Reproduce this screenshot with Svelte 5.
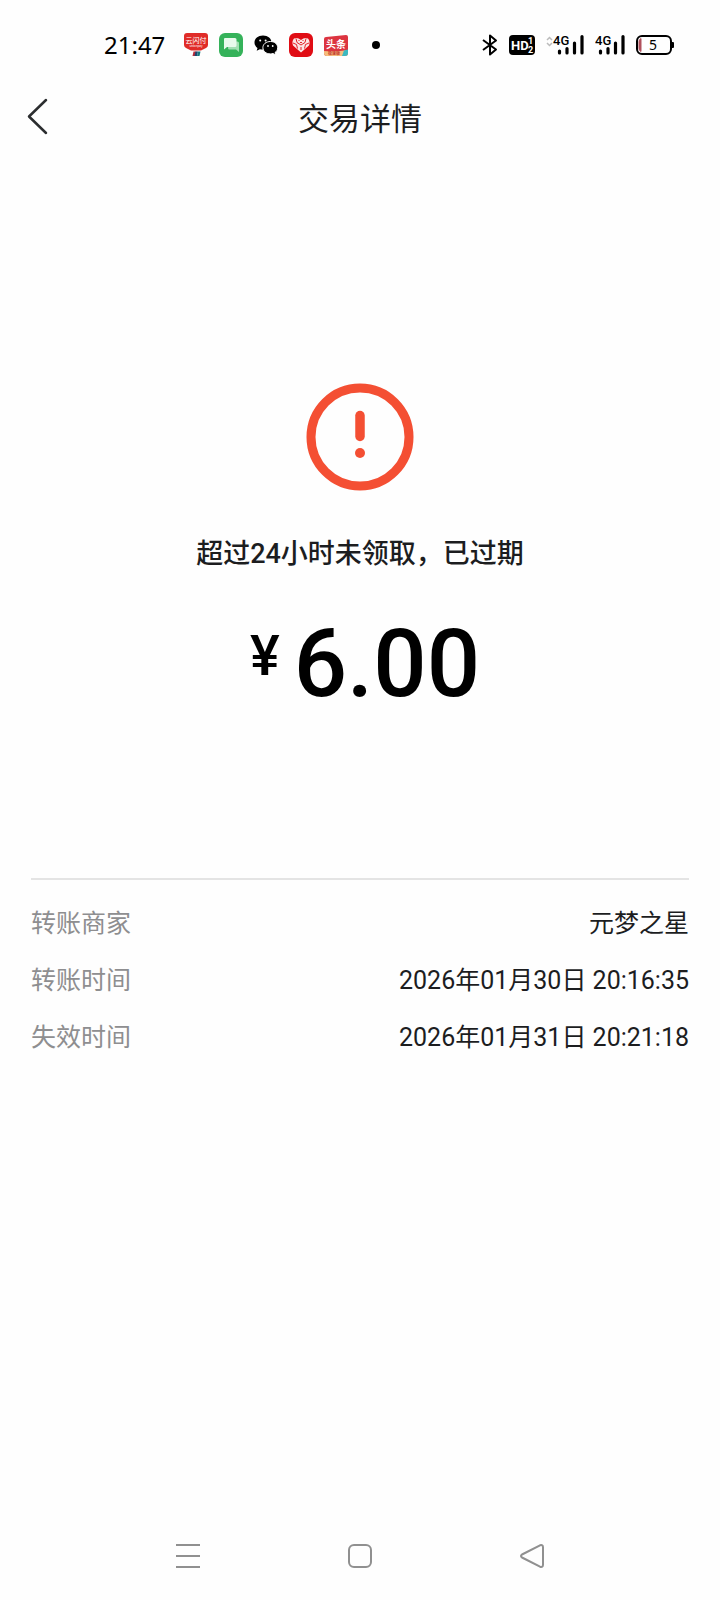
<script lang="ts">
  interface Detail {
    label: string;
    value: string;
  }

  const details: Detail[] = [
    { label: '转账商家', value: '元梦之星' },
    { label: '转账时间', value: '2026年01月30日 20:16:35' },
    { label: '失效时间', value: '2026年01月31日 20:21:18' },
  ];
</script>

<div class="screen">
  <div class="status-bar">
    <div class="status-left">
      <time class="clock">21:47</time>
      <div class="apps">
        <!-- UnionPay -->
        <svg width="26" height="26" viewBox="0 0 26 26" aria-hidden="true">
          <path d="M4 1h18q3 0 3 3v9q0 2-2 3l-5 2.500H8L3 16q-2-1-2-3V4q0-3 3-3z" fill="#e02c28" />
          <text x="13" y="11" class="thin-glyph" font-size="7" text-anchor="middle" fill="#fff">云闪付</text>
          <text x="13" y="15" class="thin-glyph" font-size="3" text-anchor="middle" fill="#fff">unionpay</text>
          <path d="M10.500 19.500h3l-1 4.500h-3z" fill="#b52c3c" />
          <path d="M12.500 19.500H15l-1 4.500h-2.500z" fill="#1d4670" />
          <path d="M15 19.500h2.500l-1 4.500H14z" fill="#16777c" />
        </svg>
        <!-- Messages -->
        <svg width="26" height="26" viewBox="0 0 26 26" aria-hidden="true">
          <rect x="1" y="1" width="24" height="24" rx="6" fill="#35b25a" />
          <path d="M11.500 9.500h8q1.500 0 1.500 1.500v9l-3-2.500h-6.500q-1.500 0-1.500-1.500z" fill="#a2dfb3" />
          <path d="M7 6h10q1.500 0 1.500 1.500v6q0 1.500-1.500 1.500H9l-3 2.500V7q0-1 1-1z" fill="#e9faed" />
        </svg>
        <!-- WeChat -->
        <svg width="26" height="26" viewBox="0 0 26 26" aria-hidden="true">
          <path d="M10 3.500c-5 0-8.500 3-8.500 7 0 2.300 1.200 4.200 3 5.500l-.8 2.800 3.200-1.600q1.500.4 3.100.4c5 0 8.500-3.100 8.500-7.100s-3.500-7-8.500-7z" />
          <path d="M17.500 9.500c-4.500 0-7.600 2.700-7.600 6.200s3.100 6.200 7.600 6.200q1.300 0 2.500-.4l2.700 1.500-.7-2.400c1.700-1.200 2.700-2.900 2.700-4.900 0-3.500-2.900-6.200-7.200-6.200z" stroke="#fefefe" stroke-width="1" />
          <g fill="#fefefe">
            <circle cx="7.200" cy="8.500" r="1" />
            <circle cx="12.600" cy="8.500" r="1" />
            <circle cx="15" cy="14" r=".9" />
            <circle cx="19.700" cy="14" r=".9" />
          </g>
        </svg>
        <!-- Heart -->
        <svg width="26" height="26" viewBox="0 0 26 26" aria-hidden="true">
          <rect x="1" y="1" width="24" height="24" rx="6" fill="#e00c14" />
          <path d="M13 20.500 5 13.500q-1.500-4 1-7 3.500-1.500 7 1.500 3.500-3 7-1.500 2.500 3 1 7z" fill="#fbe4e4" />
          <path d="M8 6.500l1 4 4 2.500 4-2.500 1-4M5 11l3.500 1.500 1 4M21 11l-3.500 1.500-1 4M13 15v3M10.500 8l1 1M15.500 8l-1 1M12 10.500h2" fill="none" stroke="#e00c14" stroke-width=".9" />
        </svg>
        <!-- Toutiao -->
        <svg width="26" height="26" viewBox="0 0 26 26" aria-hidden="true">
          <path d="M1 7q0-2 2-2l20-2q2 0 2 2v16q0 3-3 3H4q-3 0-3-3z" fill="#dc3440" />
          <path d="M1 19q12 1 24-1v3q0 3-3 3H4q-3 0-3-3z" fill="#f5bd7c" />
          <path d="M21 18.500l4-1V21q0 3-3 3h-3z" fill="#3ab8c0" />
          <text x="13" y="16" class="glyph" font-size="10" text-anchor="middle" fill="#fff">头条</text>
          <text x="11" y="23" class="glyph" font-size="4" text-anchor="middle" fill="#c43b30">极速版</text>
        </svg>
        <span class="more"></span>
      </div>
    </div>

    <div class="status-right">
      <svg width="16" height="22" viewBox="0 0 16 22" aria-hidden="true">
        <path d="M1 6l13 9.500-6 5v-19l6 5L1 16" fill="none" stroke="#000" stroke-width="2" stroke-linejoin="round" />
      </svg>
      <svg width="26" height="22" viewBox="0 0 26 22" aria-hidden="true">
        <rect y="1" width="26" height="20" rx="4" />
        <text x="2" y="16" class="badge" font-size="13" fill="#fff">HD</text>
        <text x="19" y="10" class="badge" font-size="9" fill="#fff">1</text>
        <text x="19" y="19" class="badge" font-size="9" fill="#fff">2</text>
      </svg>
      <svg width="38" height="22" viewBox="0 0 38 22" aria-hidden="true">
        <path d="M1 6l2.500-2.500L6 6M1 9l2.500 2.500L6 9" fill="none" stroke="#bbb" stroke-width="1.500" />
        <text x="7" y="11" class="net" font-size="13">4G</text>
        <path d="M13.500 19v-2M21 19v-4.500M28.500 19V9M36 19V2.500" stroke="#000" stroke-width="3.200" stroke-linecap="round" />
      </svg>
      <svg width="30" height="22" viewBox="0 0 30 22" aria-hidden="true">
        <text x="0" y="11" class="net" font-size="13">4G</text>
        <path d="M5.500 19v-2M13 19v-4.500M20.500 19V9M28 19V2.500" stroke="#000" stroke-width="3.200" stroke-linecap="round" />
      </svg>
      <svg width="38" height="22" viewBox="0 0 38 22" aria-hidden="true">
        <rect x="1" y="2" width="34" height="18" rx="5" fill="none" stroke="#000" stroke-width="2" />
        <path d="M5 4.500v13q-2-1-2-3v-7q0-2 2-3z" fill="#b0505c" stroke="#b0505c" />
        <path d="M36 8h1q1 0 1 1v4q0 1-1 1h-1z" />
        <text x="17" y="16" class="level" font-size="14" text-anchor="middle">5</text>
      </svg>
    </div>
  </div>

  <header class="title-bar">
    <button class="back" aria-label="返回">
      <svg width="22" height="38" viewBox="0 0 22 38" aria-hidden="true">
        <path d="M19 2 2 18.500 19 35" fill="none" stroke="#2b2d2f" stroke-width="2.500" stroke-linecap="round" stroke-linejoin="round" />
      </svg>
    </button>
    <h1>交易详情</h1>
  </header>

  <main>
    <section class="result">
      <svg width="108" height="108" viewBox="0 0 108 108" aria-hidden="true">
        <circle cx="54" cy="54" r="49" fill="none" stroke="#f44f33" stroke-width="9" />
        <path d="M54 32.500v21" stroke="#f44f33" stroke-width="9.500" stroke-linecap="round" />
        <circle cx="54" cy="70" r="5" fill="#f44f33" />
      </svg>
      <p class="message">超过24小时未领取，已过期</p>
      <p class="amount"><span class="currency">¥</span>6.00</p>
    </section>

    <dl class="details">
      {#each details as item}
        <div class="row">
          <dt>{item.label}</dt>
          <dd>{item.value}</dd>
        </div>
      {/each}
    </dl>
  </main>

  <nav class="system-nav">
    <button aria-label="最近任务">
      <svg width="24" height="24" viewBox="0 0 24 24" aria-hidden="true">
        <path d="M0 1h24M0 12h24M0 23h24" />
      </svg>
    </button>
    <button aria-label="主屏幕">
      <svg width="24" height="24" viewBox="0 0 24 24" aria-hidden="true">
        <rect x="1" y="1" width="22" height="22" rx="5" />
      </svg>
    </button>
    <button aria-label="返回上一页">
      <svg width="24" height="24" viewBox="0 0 24 24" aria-hidden="true">
        <path d="M2 10.500 20 1.300q3-1 3 2v17.400q0 3-3 2L2 13.500q-2-1.500 0-3z" />
      </svg>
    </button>
  </nav>
</div>

<style>
  :global(body) {
    background: #fefefe;
  }

  .screen {
    display: flex;
    flex-direction: column;
    min-height: 100vh;
    background: #fefefe;
    color: #1c1d1f;
    font-family: Roboto, 'Noto Sans CJK SC', sans-serif;
  }

  svg {
    display: block;
    flex-shrink: 0;
  }

  button {
    display: flex;
    align-items: center;
    justify-content: center;
    padding: 0;
    border: none;
    background: none;
    cursor: pointer;
  }

  .status-bar {
    display: flex;
    align-items: center;
    justify-content: space-between;
    height: 90px;
    padding: 0 46px 0 104px;
    color: #000;
  }

  .status-left,
  .status-right,
  .apps {
    display: flex;
    align-items: center;
  }

  .status-left {
    gap: 18px;
  }

  .apps {
    gap: 9px;
  }

  .status-right {
    gap: 11px;
  }

  .clock {
    font-family: 'Noto Sans', sans-serif;
    font-size: 24px;
    line-height: 32px;
  }

  .more {
    width: 8px;
    height: 8px;
    margin-left: 14px;
    border-radius: 50%;
    background: #000;
  }

  .glyph,
  .thin-glyph {
    font-family: 'Noto Sans CJK SC', sans-serif;
    font-weight: 700;
  }

  .thin-glyph {
    font-weight: 400;
  }

  .badge {
    font-family: Roboto, sans-serif;
    font-weight: 700;
  }

  .net {
    font-family: Roboto, sans-serif;
    font-weight: 500;
  }

  .level {
    font-family: 'Noto Sans', sans-serif;
  }

  .title-bar {
    display: grid;
    grid-template-columns: 48px 1fr 48px;
    align-items: start;
    height: 56px;
    padding: 0 16px;
  }

  .back {
    height: 54px;
    padding-right: 4px;
  }

  h1 {
    margin: 0;
    font-size: 31px;
    font-weight: 400;
    line-height: 60px;
    text-align: center;
  }

  main {
    flex: 1;
    padding: 237px 31px 0;
  }

  .result {
    display: flex;
    flex-direction: column;
    align-items: center;
    padding-bottom: 159px;
    border-bottom: 2px solid #e4e4e4;
  }

  .message {
    margin: 43px 0 0;
    font-size: 27px;
    font-weight: 500;
    line-height: 40px;
  }

  .amount {
    display: flex;
    align-items: flex-start;
    gap: 14px;
    margin: 35px 0 0;
    padding-left: 10px;
    color: #000;
    font-size: 94px;
    font-weight: 500;
    line-height: 110px;
  }

  .currency {
    font-size: 56px;
    line-height: 94px;
  }

  .details {
    margin: 0;
    padding-top: 15px;
  }

  .row {
    display: flex;
    justify-content: space-between;
    font-size: 25px;
    line-height: 57px;
  }

  dt {
    color: #8e8e90;
  }

  dd {
    margin: 0;
  }

  .system-nav {
    display: grid;
    grid-template-columns: repeat(3, 1fr);
    height: 88px;
    padding: 0 102px;
  }

  .system-nav svg {
    fill: none;
    stroke: #909090;
    stroke-width: 2;
    stroke-linejoin: round;
  }
</style>
